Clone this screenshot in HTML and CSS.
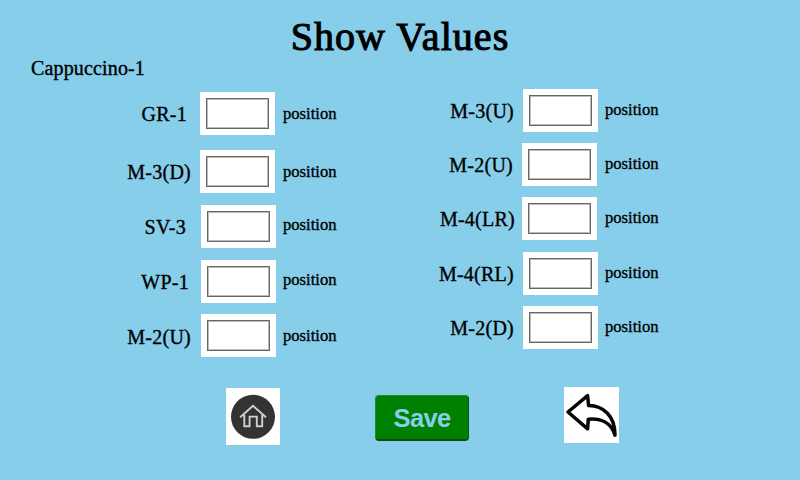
FILE: index.html
```html
<!DOCTYPE html>
<html lang="en">
<head>
<meta charset="utf-8">
<title>Show Values</title>
<link rel="stylesheet" href="styles.css">
</head>
<body>
<header>
  <h1>Show Values</h1>
  <p class="recipe">Cappuccino-1</p>
</header>
<main>
  <section class="column left">
    <div class="row"><span class="label">GR-1</span><div class="field"><div class="entry"></div></div><span class="unit">position</span></div>
    <div class="row"><span class="label">M-3(D)</span><div class="field"><div class="entry"></div></div><span class="unit">position</span></div>
    <div class="row"><span class="label">SV-3</span><div class="field"><div class="entry"></div></div><span class="unit">position</span></div>
    <div class="row"><span class="label">WP-1</span><div class="field"><div class="entry"></div></div><span class="unit">position</span></div>
    <div class="row"><span class="label">M-2(U)</span><div class="field"><div class="entry"></div></div><span class="unit">position</span></div>
  </section>
  <section class="column right">
    <div class="row"><span class="label">M-3(U)</span><div class="field"><div class="entry"></div></div><span class="unit">position</span></div>
    <div class="row"><span class="label">M-2(U)</span><div class="field"><div class="entry"></div></div><span class="unit">position</span></div>
    <div class="row"><span class="label">M-4(LR)</span><div class="field"><div class="entry"></div></div><span class="unit">position</span></div>
    <div class="row"><span class="label">M-4(RL)</span><div class="field"><div class="entry"></div></div><span class="unit">position</span></div>
    <div class="row"><span class="label">M-2(D)</span><div class="field"><div class="entry"></div></div><span class="unit">position</span></div>
  </section>
</main>
<footer>
  <a class="tile home" aria-label="Home">
    <svg viewBox="0 0 54 57" width="54" height="57">
      <circle cx="27" cy="28.8" r="22" fill="#333"/>
      <path d="M14.2 29.2 27 17.8 40 29.2M18.3 27V38.2H23.6V28.6H30.8V38.2H36.2V27" fill="none" stroke="#d0d0d0" stroke-width="1.9"/>
    </svg>
  </a>
  <button class="save">Save</button>
  <a class="tile back" aria-label="Back">
    <svg viewBox="0 0 55 56" width="55" height="56">
      <path d="M4 25 23.6 8.6 24.6 18.6C39 19 51 28 51 48.2C47 35 36 31 24.3 32.2L23.6 41.8Z" fill="none" stroke="#050505" stroke-width="3.5" stroke-linejoin="round"/>
    </svg>
  </a>
</footer>
</body>
</html>
```
FILE: styles.css
```css
* { box-sizing: border-box; }
body {
  margin: 0;
  width: 800px;
  height: 480px;
  overflow: hidden;
  background: #87ceeb;
  color: #000;
  font-family: "Liberation Serif", serif;
}
header { height: 88px; padding-top: 14px; }
h1 {
  margin: 0;
  text-align: center;
  font-size: 40px;
  line-height: 46px;
  font-weight: 400;
  letter-spacing: 1.05px;
  -webkit-text-stroke: 1.1px #000;
}
.recipe {
  margin: -2px 0 0 31px;
  font-size: 20px;
  line-height: 20px;
  letter-spacing: .15px;
  -webkit-text-stroke: .35px #000;
}
main { display: flex; height: 300px; }
.column { width: 400px; }
.left { padding-top: 4px; }
.right { padding-top: 1px; }
.row { display: flex; align-items: flex-start; height: 55px; }
.label {
  width: 80px;
  margin-top: 12px;
  text-align: right;
  font-size: 20px;
  line-height: 20px;
  letter-spacing: .25px;
  white-space: nowrap;
  -webkit-text-stroke: .35px #000;
}
.left .label { margin-left: 111px; margin-right: 9px; }
.right .label { margin-left: 34px; margin-right: 8px; }
.field { width: 75px; height: 43px; padding: 6px 0 0 6px; background: #fff; }
.entry { width: 63px; height: 31px; border: 1px solid #666; box-shadow: inset 0 0 0 1px #bbb; }
.unit {
  margin: 10px 0 0 8px;
  font-size: 16.6px;
  line-height: 20px;
  -webkit-text-stroke: .35px #000;
}
.left .row:nth-child(1) { height: 58px; }
.left .row:nth-child(-n+2) .unit { margin-top: 12px; }
.left .row:nth-child(n+3) .field { margin-left: 1px; }
.left .row:nth-child(n+3) .unit { margin-left: 7px; }
.left .row:nth-child(3) .unit { margin-top: 10px; }
.left .row:nth-child(4) .unit { margin-top: 10px; }
.left .row:nth-child(5) { margin-top: -1px; }
.left .row:nth-child(5) .label { margin-top: 13px; }
.left .row:nth-child(5) .unit { margin-top: 12px; }
.left .row:nth-child(1) .label { margin-left: 107px; margin-right: 13px; }
.left .row:nth-child(3) .label { margin-left: 106px; margin-right: 14px; }
.left .row:nth-child(4) .label { margin-left: 109px; margin-right: 11px; }
.right .row { height: 54px; }
.right .row:nth-child(3) { height: 55px; }
.right .row .unit { margin-top: 11px; }
.right .field { margin-left: 1px; }
.right .row:nth-child(2) .label { margin-left: 33px; margin-right: 9px; }
.right .row:nth-child(3) .label { margin-left: 35px; margin-right: 7px; }
.right .row:nth-child(2) .field,
.right .row:nth-child(3) .field { margin: 0 1px 0 0; }
.right .unit { margin-left: 7px; }
footer { display: flex; align-items: flex-start; height: 92px; margin-top: -1px; }
.tile { display: block; background: #fff; }
.tile svg { display: block; }
.home { margin: 1px 0 0 226px; }
.back { margin-left: 95px; }
.save {
  width: 94px;
  height: 46px;
  margin: 8px 0 0 95px;
  padding: 0;
  border: 1.5px solid #1c8c2c;
  border-right-color: #0c5210;
  border-bottom: 2px solid #0c4810;
  border-radius: 4px;
  background: #008000;
  color: #87ceeb;
  font: 700 25.5px/42px "Liberation Sans", sans-serif;
  letter-spacing: -.7px;
}
```
